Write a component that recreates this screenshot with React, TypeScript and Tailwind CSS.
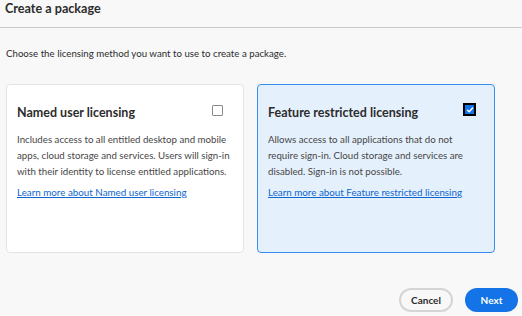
type LicenseOption = {
  id: string;
  title: string;
  lines: string[];
  link: string;
  selected: boolean;
};

const OPTIONS: LicenseOption[] = [
  {
    id: 'named',
    title: 'Named user licensing',
    lines: [
      'Includes access to all entitled desktop and mobile',
      'apps, cloud storage and services. Users will sign-in',
      'with their identity to license entitled applications.',
    ],
    link: 'Learn more about Named user licensing',
    selected: false,
  },
  {
    id: 'frl',
    title: 'Feature restricted licensing',
    lines: [
      'Allows access to all applications that do not',
      'require sign-in. Cloud storage and services are',
      'disabled. Sign-in is not possible.',
    ],
    link: 'Learn more about Feature restricted licensing',
    selected: true,
  },
];

function Checkbox({ checked }: { checked: boolean }) {
  if (checked) {
    return (
      <div className="w-[13px] h-[13px] mt-[-2px] border-2 border-black bg-[#1473e6] flex items-center justify-center">
        <svg viewBox="0 0 10 10" className="w-[8px] h-[8px]">
          <path d="M1.8 5.2 L4 7.3 L8.2 2.6" fill="none" stroke="white" strokeWidth="1.8" strokeLinecap="round" strokeLinejoin="round" />
        </svg>
      </div>
    );
  }
  return <div className="w-[11px] h-[11px] mr-[1px] border border-[#8a8a8a] bg-white rounded-[1px]" />;
}

function OptionCard({ option }: { option: LicenseOption }) {
  return (
    <div
      className={
        option.selected
          ? 'w-[238px] h-[169px] rounded-[4px] border border-[#378ef0] bg-[#e5f0fd] pt-[20px] pl-[10px] pr-[18px]'
          : 'w-[238px] h-[169px] rounded-[4px] border border-[#e3e3e3] bg-white pt-[20px] pl-[10px] pr-[19px]'
      }
    >
      <div className="flex items-start justify-between">
        <h3 className="text-[12.5px] leading-[15px] font-bold text-[#2c2c2c]">{option.title}</h3>
        <div className="pt-[-1px]">
          <Checkbox checked={option.selected} />
        </div>
      </div>
      <p className="mt-[11px] text-[9.7px] leading-[16px] text-[#464646] whitespace-nowrap">
        {option.lines.map((line, i) => (
          <span key={i} className="block">
            {line}
          </span>
        ))}
      </p>
      <a href="#" className="block mt-[5px] text-[9.8px] leading-[16px] text-[#0d66d0] underline whitespace-nowrap">
        {option.link}
      </a>
    </div>
  );
}

export default function App() {
  return (
    <div className="w-[522px] h-[316px] bg-[#f8f8f8] flex flex-col overflow-hidden font-['Lato',sans-serif]">
      {/* Header */}
      <div className="h-[28px] border-b border-[#cacaca] pt-[1px] pl-[5px]">
        <h1 className="text-[12.6px] leading-[15px] font-bold text-[#2c2c2c]">Create a package</h1>
      </div>

      <p className="mt-[19px] pl-[6px] text-[9.7px] leading-[12px] text-[#2c2c2c]">
        Choose the licensing method you want to use to create a package.
      </p>

      {/* Options */}
      <div className="mt-[25px] pl-[6px] flex gap-[13px]">
        {OPTIONS.map((o) => (
          <OptionCard key={o.id} option={o} />
        ))}
      </div>

      {/* Footer */}
      <div className="mt-[35px] pr-[4px] flex justify-end gap-[12px]">
        <button className="w-[54px] h-[24px] rounded-full border-2 border-[#d5d5d5] bg-[#f8f8f8] text-[10px] font-bold text-[#2c2c2c]">
          Cancel
        </button>
        <button className="w-[53px] h-[24px] rounded-full bg-[#1473e6] text-[10px] font-bold text-white">
          Next
        </button>
      </div>
    </div>
  );
}
